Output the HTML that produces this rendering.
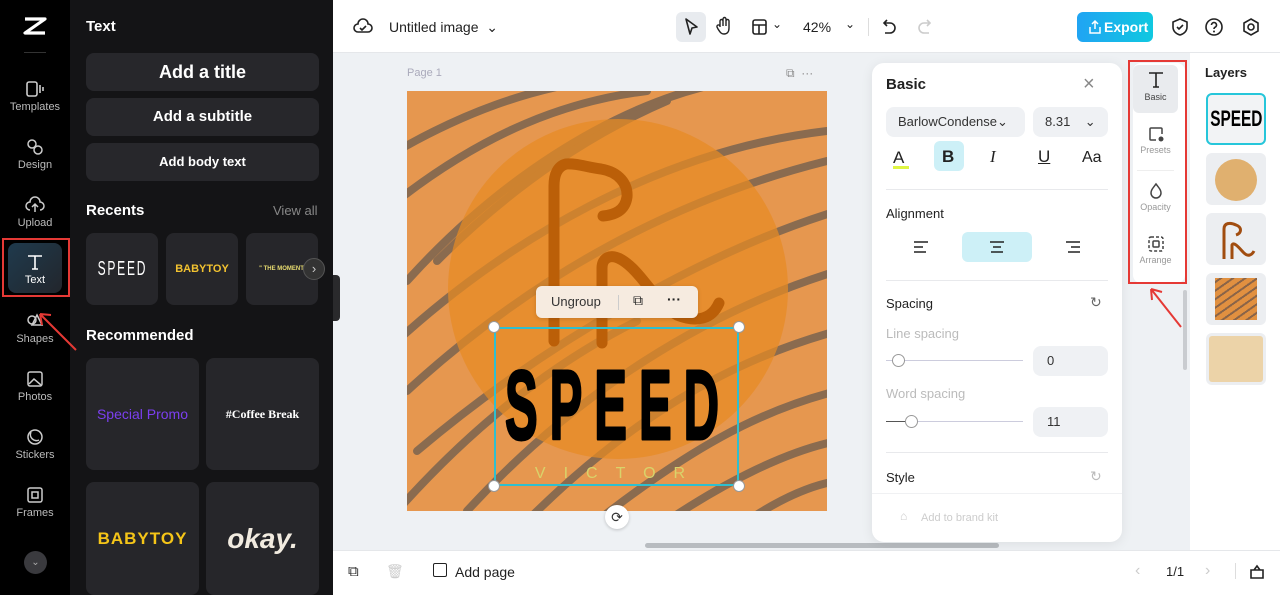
<!DOCTYPE html>
<html><head><meta charset="utf-8"><style>
*{box-sizing:border-box;margin:0;padding:0}
body{width:1280px;height:595px;overflow:hidden;font-family:"Liberation Sans",sans-serif;background:#eef1f4;position:relative}
.abs{position:absolute}
.rail{left:0;top:0;width:70px;height:595px;background:#000}
.ri{position:absolute;left:0;width:70px;text-align:center;color:#bbb;font-size:11px}
.ri svg{display:block;margin:0 auto 3px}
.panel{left:70px;top:0;width:263px;height:595px;background:#141416}
.btn{position:absolute;left:16px;width:233px;background:#27272b;border-radius:8px;color:#fff;font-weight:bold;text-align:center}
.card{position:absolute;background:#26262a;border-radius:8px;display:flex;align-items:center;justify-content:center}
.top{left:333px;top:0;width:947px;height:53px;background:#fff;border-bottom:1px solid #e5e7ea}
.bot{left:333px;top:550px;width:947px;height:45px;background:#fff;border-top:1px solid #e5e7ea}
.props{left:872px;top:63px;width:250px;height:479px;background:#fff;border-radius:12px;box-shadow:0 2px 12px rgba(0,0,0,.08)}
.lbl{position:absolute;font-size:13px;color:#222}
.g{color:#bbb}
.inp{position:absolute;background:#eff1f4;border-radius:8px;font-size:13px;color:#333}
.hr{position:absolute;left:14px;width:222px;height:1px;background:#e8e9ec}
.layers{left:1190px;top:53px;width:90px;height:497px;background:#fff}
.th{position:absolute;left:16px;width:60px;height:52px;border-radius:6px;background:#eceef1;overflow:hidden}
.nar{display:inline-block;transform:scaleX(.6)}
</style></head><body>
<div class="abs rail">
 <svg class="abs" style="left:23px;top:16px" width="24" height="20" viewBox="0 0 24 20"><path d="M2 3h20L2 17h20" fill="none" stroke="#fff" stroke-width="3.2" stroke-linejoin="round"/></svg>
 <div class="abs" style="left:24px;top:52px;width:22px;height:1px;background:#333"></div>
 <div class="ri" style="top:80px"><svg width="20" height="18"><rect x="2" y="2" width="10" height="14" rx="2" fill="none" stroke="#ccc" stroke-width="1.6"/><path d="M15 5v8M18 7v4" stroke="#ccc" stroke-width="1.6"/></svg>Templates</div>
 <div class="ri" style="top:138px"><svg width="20" height="18"><circle cx="7" cy="6" r="4" fill="none" stroke="#ccc" stroke-width="1.5"/><circle cx="13" cy="12" r="4" fill="none" stroke="#ccc" stroke-width="1.5"/></svg>Design</div>
 <div class="ri" style="top:196px"><svg width="20" height="18"><path d="M5 14a4 4 0 0 1 0-8 5 5 0 0 1 10 0 4 4 0 0 1 0 8M10 8v8M7 11l3-3 3 3" fill="none" stroke="#ccc" stroke-width="1.5"/></svg>Upload</div>
 <div class="abs" style="left:2px;top:238px;width:68px;height:59px;border:2px solid #e53935"></div>
 <div class="abs" style="left:8px;top:243px;width:54px;height:50px;border-radius:8px;background:linear-gradient(135deg,#1f3a4d,#22262c)"></div>
 <div class="ri" style="top:253px;color:#fff;font-size:11px"><svg width="20" height="18"><path d="M3 3h14M10 3v13M7 16h6" stroke="#fff" stroke-width="1.6" fill="none"/></svg>Text</div>
 <div class="ri" style="top:312px"><svg width="20" height="18"><circle cx="7" cy="8" r="4" fill="none" stroke="#ccc" stroke-width="1.5"/><path d="M12 3l5 10h-10z" fill="none" stroke="#ccc" stroke-width="1.5"/></svg>Shapes</div>
 <div class="ri" style="top:370px"><svg width="20" height="18"><rect x="3" y="2" width="14" height="14" rx="2" fill="none" stroke="#ccc" stroke-width="1.5"/><path d="M4 14l5-5 7 6" fill="none" stroke="#ccc" stroke-width="1.5"/></svg>Photos</div>
 <div class="ri" style="top:428px"><svg width="20" height="18"><circle cx="10" cy="9" r="7" fill="none" stroke="#ccc" stroke-width="1.5"/><path d="M6 4a6 6 0 0 0 8 8" fill="none" stroke="#ccc" stroke-width="1.5"/></svg>Stickers</div>
 <div class="ri" style="top:486px"><svg width="20" height="18"><rect x="3" y="2" width="14" height="14" rx="2" fill="none" stroke="#ccc" stroke-width="1.5"/><rect x="7" y="6" width="6" height="6" fill="none" stroke="#ccc" stroke-width="1.5"/></svg>Frames</div>
 <div class="abs" style="left:24px;top:551px;width:23px;height:23px;border-radius:50%;background:#3a3a3e;color:#aaa;font-size:10px;text-align:center;line-height:23px">⌄</div>
</div>
<div class="abs panel">
 <div class="abs" style="left:16px;top:18px;color:#fff;font-weight:bold;font-size:15px">Text</div>
 <div class="btn" style="top:53px;height:38px;line-height:38px;font-size:18px">Add a title</div>
 <div class="btn" style="top:98px;height:38px;line-height:38px;font-size:15px">Add a subtitle</div>
 <div class="btn" style="top:143px;height:38px;line-height:38px;font-size:13px">Add body text</div>
 <div class="abs" style="left:16px;top:202px;color:#fff;font-weight:bold;font-size:15px">Recents</div>
 <div class="abs" style="left:203px;top:203px;color:#888;font-size:13px">View all</div>
 <div class="card" style="left:16px;top:233px;width:72px;height:72px;color:#fff;font-size:20px;letter-spacing:3px"><span class="nar">SPEED</span></div>
 <div class="card" style="left:96px;top:233px;width:72px;height:72px;color:#f2c230;font-size:11px;font-weight:bold">BABYTOY</div>
 <div class="card" style="left:176px;top:233px;width:72px;height:72px;color:#e8dc70;font-size:6px;font-weight:bold">" THE MOMENT.</div>
 <div class="abs" style="left:233px;top:258px;width:22px;height:22px;border-radius:50%;background:#333;border:1px solid #555;color:#ccc;font-size:13px;text-align:center;line-height:20px">›</div>
 <div class="abs" style="left:16px;top:327px;color:#fff;font-weight:bold;font-size:15px">Recommended</div>
 <div class="card" style="left:16px;top:358px;width:113px;height:112px;color:#7b3ff0;font-size:14px">Special Promo</div>
 <div class="card" style="left:136px;top:358px;width:113px;height:112px;color:#fff;font-size:12px;font-weight:bold;font-family:'Liberation Serif',serif">#Coffee Break</div>
 <div class="card" style="left:16px;top:482px;width:113px;height:113px;color:#f5c518;font-size:17px;font-weight:bold;letter-spacing:1px">BABYTOY</div>
 <div class="card" style="left:136px;top:482px;width:113px;height:113px;color:#f1ebe0;font-size:28px;font-weight:bold;font-style:italic">okay.</div>
</div>
<div class="abs" style="left:333px;top:275px;width:7px;height:46px;background:#2a2a2c;border-radius:0 4px 4px 0"></div>
<div class="abs top">
 <svg class="abs" style="left:20px;top:18px" width="20" height="18"><path d="M5 14a4 4 0 0 1 0-8 5 5 0 0 1 10 0 4 4 0 0 1 0 8z M7 10l2 2 4-4" fill="none" stroke="#222" stroke-width="1.6"/></svg>
 <div class="abs" style="left:56px;top:19px;font-size:14px;color:#222">Untitled image &nbsp;⌄</div>
 <div class="abs" style="left:343px;top:12px;width:30px;height:30px;border-radius:6px;background:#e8ebef"></div>
 <svg class="abs" style="left:350px;top:17px" width="16" height="20"><path d="M3 2l11 8-5 1-2 6z" fill="none" stroke="#222" stroke-width="1.6" stroke-linejoin="round"/></svg>
 <svg class="abs" style="left:382px;top:16px" width="18" height="20"><path d="M5 11V5a1.5 1.5 0 0 1 3 0v5V3a1.5 1.5 0 0 1 3 0v7V5a1.5 1.5 0 0 1 3 0v7c0 4-2 6-5 6s-4-2-6-5l-1-2a1.5 1.5 0 0 1 3-1z" fill="none" stroke="#222" stroke-width="1.4"/></svg>
 <svg class="abs" style="left:418px;top:18px" width="18" height="18"><rect x="2" y="2" width="13" height="14" rx="2" fill="none" stroke="#222" stroke-width="1.6"/><path d="M2 7h13M8 7v9" stroke="#222" stroke-width="1.6"/></svg>
 <div class="abs" style="left:439px;top:17px;font-size:12px;color:#222">⌄</div>
 <div class="abs" style="left:470px;top:19px;font-size:14px;color:#222">42%</div>
 <div class="abs" style="left:512px;top:17px;font-size:12px;color:#222">⌄</div>
 <div class="abs" style="left:535px;top:18px;width:1px;height:18px;background:#ddd"></div>
 <svg class="abs" style="left:548px;top:17px" width="18" height="20"><path d="M6 3L3 6l3 3M3 6h6a5 5 0 0 1 0 10H4" fill="none" stroke="#222" stroke-width="1.6"/></svg>
 <svg class="abs" style="left:582px;top:17px" width="18" height="20"><path d="M12 3l3 3-3 3M15 6H9a5 5 0 0 0 0 10h5" fill="none" stroke="#ccc" stroke-width="1.6"/></svg>
 <div class="abs" style="left:744px;top:12px;width:76px;height:30px;border-radius:6px;background:linear-gradient(90deg,#20a4f3,#10c8e0);color:#fff;font-weight:bold;font-size:14px;line-height:30px;padding-left:27px">Export</div>
 <svg class="abs" style="left:755px;top:19px" width="14" height="16"><path d="M7 2v8M4 5l3-3 3 3M2 8v6h10V8" fill="none" stroke="#fff" stroke-width="1.5"/></svg>
 <svg class="abs" style="left:838px;top:17px" width="18" height="20"><path d="M9 2l7 3v5c0 4-3 7-7 8-4-1-7-4-7-8V5z M6 10l2 2 4-4" fill="none" stroke="#222" stroke-width="1.6"/></svg>
 <svg class="abs" style="left:871px;top:17px" width="20" height="20"><circle cx="10" cy="10" r="8" fill="none" stroke="#222" stroke-width="1.6"/><path d="M7.5 8a2.5 2.5 0 1 1 3.5 2.3c-.8.4-1 .9-1 1.7" fill="none" stroke="#222" stroke-width="1.6"/><circle cx="10" cy="14.5" r="1" fill="#222"/></svg>
 <svg class="abs" style="left:908px;top:17px" width="20" height="20"><path d="M10 2l7 4v8l-7 4-7-4V6z" fill="none" stroke="#222" stroke-width="1.6"/><circle cx="10" cy="10" r="3" fill="none" stroke="#222" stroke-width="1.6"/></svg>
</div>
<div class="abs" style="left:407px;top:67px;font-size:11px;color:#aab">Page 1</div>
<div class="abs" style="left:786px;top:66px;font-size:12px;color:#888">⧉ &nbsp;···</div>
<svg class="abs" style="left:407px;top:91px" width="420" height="420" viewBox="0 0 420 420">
 <rect width="420" height="420" fill="#e6974f"/>
 <g fill="none" stroke="#86694f" stroke-width="8" stroke-linecap="round" opacity=".95">
  <path d="M-10 60C60 20 120 0 180 -10"/><path d="M-10 110C80 40 160 10 240 0"/>
  <path d="M0 190C90 90 200 20 300 -5"/><path d="M-10 250C100 150 250 60 420 40"/>
  <path d="M0 300C120 190 260 110 420 70"/><path d="M10 360C140 250 300 160 430 120"/>
  <path d="M60 420C170 300 300 220 430 180"/><path d="M120 430C220 330 320 270 430 240"/>
  <path d="M190 430C280 360 350 320 430 300"/><path d="M260 430C320 390 380 360 430 350"/>
  <path d="M-10 420C70 330 150 270 230 230"/><path d="M30 170C110 90 190 40 260 10"/>
  <path d="M340 430C370 410 400 395 430 390"/>
 </g>
 <circle cx="211" cy="198" r="170" fill="#e88b22" opacity=".72"/>
 <g fill="none" stroke="#bb5f08" stroke-width="11" stroke-linecap="round" stroke-linejoin="round">
  <path d="M147 250V95c0-12 4-20 12-22 10-1 20 3 35 5 18 3 27 15 26 28-2 14-13 18-24 19"/>
  <path d="M195 252v-75c0-10 8-15 20-8 20 12 35 45 55 55 20 8 35 4 42-12"/>
 </g>
 <text transform="translate(211,348) scale(0.5,1)" x="0" y="0" text-anchor="middle" font-family="Liberation Sans, sans-serif" font-weight="bold" font-size="98" letter-spacing="24" fill="#000" stroke="#000" stroke-width="3" stroke-linejoin="round">SPEED</text>
 <text x="212" y="387" text-anchor="middle" font-family="Liberation Sans, sans-serif" font-size="16" letter-spacing="18" fill="#d9d36a">VICTOR</text>
</svg>
<div class="abs" style="left:494px;top:327px;width:245px;height:159px;border:2px solid #2fbfcf"></div>
<div class="abs" style="left:488px;top:321px;width:12px;height:12px;border-radius:50%;background:#fff;border:1px solid #999"></div>
<div class="abs" style="left:733px;top:321px;width:12px;height:12px;border-radius:50%;background:#fff;border:1px solid #999"></div>
<div class="abs" style="left:488px;top:480px;width:12px;height:12px;border-radius:50%;background:#fff;border:1px solid #999"></div>
<div class="abs" style="left:733px;top:480px;width:12px;height:12px;border-radius:50%;background:#fff;border:1px solid #999"></div>
<div class="abs" style="left:536px;top:286px;width:162px;height:32px;border-radius:6px;background:#f6ebe0;box-shadow:0 1px 4px rgba(0,0,0,.15)">
 <div class="abs" style="left:15px;top:8px;font-size:13px;color:#333">Ungroup</div>
 <div class="abs" style="left:82px;top:9px;width:1px;height:15px;background:#ccc"></div>
 <div class="abs" style="left:97px;top:6px;font-size:14px;color:#222">⧉</div>
 <div class="abs" style="left:131px;top:5px;font-size:14px;color:#222;font-weight:bold">···</div>
</div>
<div class="abs" style="left:605px;top:505px;width:24px;height:24px;border-radius:50%;background:#fff;box-shadow:0 1px 3px rgba(0,0,0,.2);text-align:center;line-height:24px;font-size:14px;color:#333">⟳</div>
<div class="abs" style="left:645px;top:543px;width:354px;height:5px;border-radius:3px;background:#b8bcc0"></div>
<div class="abs props">
 <div class="lbl" style="left:14px;top:13px;font-size:15px;font-weight:bold">Basic</div>
 <div class="lbl" style="left:211px;top:10px;font-size:20px;color:#888">×</div>
 <div class="inp" style="left:14px;top:44px;width:139px;height:30px;line-height:30px;padding-left:12px">BarlowCondense⌄</div>
 <div class="inp" style="left:161px;top:44px;width:75px;height:30px;line-height:30px;padding-left:12px">8.31 &nbsp;&nbsp;&nbsp;⌄</div>
 <div class="lbl" style="left:21px;top:85px;font-size:17px">A</div>
 <div class="abs" style="left:21px;top:103px;width:16px;height:3px;background:#dff542"></div>
 <div class="abs" style="left:62px;top:78px;width:30px;height:30px;border-radius:6px;background:#cdf0f7"></div>
 <div class="lbl" style="left:70px;top:84px;font-size:17px;font-weight:bold">B</div>
 <div class="lbl" style="left:118px;top:84px;font-size:17px;font-style:italic;font-family:'Liberation Serif',serif">I</div>
 <div class="lbl" style="left:166px;top:84px;font-size:17px;text-decoration:underline">U</div>
 <div class="lbl" style="left:210px;top:86px;font-size:16px">Aa</div>
 <div class="hr" style="top:126px"></div>
 <div class="lbl" style="left:14px;top:143px">Alignment</div>
 <div class="abs" style="left:90px;top:169px;width:70px;height:30px;border-radius:6px;background:#cdf0f7"></div>
 <svg class="abs" style="left:41px;top:177px" width="16" height="14"><path d="M1 2h14M1 7h9M1 12h12" stroke="#222" stroke-width="1.5"/></svg>
 <svg class="abs" style="left:117px;top:177px" width="16" height="14"><path d="M1 2h14M4 7h8M2 12h12" stroke="#222" stroke-width="1.5"/></svg>
 <svg class="abs" style="left:193px;top:177px" width="16" height="14"><path d="M1 2h14M6 7h9M3 12h12" stroke="#222" stroke-width="1.5"/></svg>
 <div class="hr" style="top:217px"></div>
 <div class="lbl" style="left:14px;top:233px">Spacing</div>
 <div class="lbl" style="left:218px;top:231px;font-size:14px;color:#666">↻</div>
 <div class="lbl g" style="left:14px;top:263px">Line spacing</div>
 <div class="abs" style="left:14px;top:297px;width:137px;height:1px;background:#ccd"></div>
 <div class="abs" style="left:20px;top:291px;width:13px;height:13px;border-radius:50%;background:#fff;border:1px solid #999"></div>
 <div class="inp" style="left:161px;top:283px;width:75px;height:30px;line-height:30px;padding-left:14px">0</div>
 <div class="lbl g" style="left:14px;top:323px">Word spacing</div>
 <div class="abs" style="left:14px;top:358px;width:137px;height:1px;background:#ccd"></div>
 <div class="abs" style="left:14px;top:358px;width:26px;height:1px;background:#555"></div>
 <div class="abs" style="left:33px;top:352px;width:13px;height:13px;border-radius:50%;background:#fff;border:1px solid #999"></div>
 <div class="inp" style="left:161px;top:344px;width:75px;height:30px;line-height:30px;padding-left:14px">11</div>
 <div class="hr" style="top:389px"></div>
 <div class="lbl" style="left:14px;top:407px">Style</div>
 <div class="lbl" style="left:218px;top:405px;font-size:14px;color:#bbb">↻</div>
 <div class="abs" style="left:0;top:430px;width:250px;height:1px;background:#f0f1f3"></div>
 <div class="lbl" style="left:49px;top:449px;font-size:11px;color:#ccc">Add to brand kit</div>
 <div class="lbl" style="left:28px;top:446px;font-size:12px;color:#ccc">⌂</div>
</div>
<div class="abs" style="left:1133px;top:63px;width:52px;height:220px;background:#fff;border-radius:8px"></div>
<div class="abs" style="left:1128px;top:60px;width:59px;height:224px;border:2px solid #e53935"></div>
<div class="abs" style="left:1133px;top:65px;width:45px;height:48px;border-radius:6px;background:#e9ebee"></div>
<div class="abs" style="left:1133px;top:70px;width:45px;text-align:center;font-size:9px;color:#444"><svg width="20" height="20"><path d="M3 3h14M10 3v14M7 17h6" stroke="#222" stroke-width="1.6" fill="none"/></svg><br>Basic</div>
<div class="abs" style="left:1133px;top:125px;width:45px;text-align:center;font-size:9px;color:#999"><svg width="18" height="18"><path d="M9 15H4a1 1 0 0 1-1-1V4a1 1 0 0 1 1-1h10a1 1 0 0 1 1 1v5" fill="none" stroke="#444" stroke-width="1.5"/><circle cx="14" cy="14" r="2.5" fill="#444"/></svg><br>Presets</div>
<div class="abs" style="left:1137px;top:170px;width:37px;height:1px;background:#eee"></div>
<div class="abs" style="left:1133px;top:182px;width:45px;text-align:center;font-size:9px;color:#999"><svg width="18" height="18"><path d="M9 2c3 4 5 6 5 9a5 5 0 0 1-10 0c0-3 2-5 5-9z" fill="none" stroke="#444" stroke-width="1.5"/></svg><br>Opacity</div>
<div class="abs" style="left:1133px;top:235px;width:45px;text-align:center;font-size:9px;color:#999"><svg width="18" height="18"><rect x="2" y="2" width="14" height="14" rx="2" fill="none" stroke="#444" stroke-width="1.5" stroke-dasharray="3 2"/><rect x="6" y="6" width="6" height="6" rx="1" fill="none" stroke="#444" stroke-width="1.5"/></svg><br>Arrange</div>
<svg class="abs" style="left:1145px;top:285px" width="40" height="46"><path d="M36 42L6 4M6 4l1 11M6 4l11 3" fill="none" stroke="#e53935" stroke-width="2"/></svg>
<svg class="abs" style="left:30px;top:308px" width="50" height="46"><path d="M46 42L10 6M10 6l2 11M10 6l11 1" fill="none" stroke="#e53935" stroke-width="2"/></svg>
<div class="abs" style="left:1183px;top:290px;width:4px;height:80px;background:#c9ccd0;border-radius:2px"></div>
<div class="abs layers">
 <div class="abs" style="left:15px;top:12px;font-size:13px;font-weight:bold;color:#222">Layers</div>
 <div class="th" style="top:40px;border:2px solid #26c6da;background:#f2f3f5;font-weight:bold;font-size:22px;line-height:48px;text-align:center;white-space:nowrap"><span class="nar" style="transform:scaleX(.7);margin-left:-10px;margin-right:-10px">SPEED</span></div>
 <div class="th" style="top:100px"><div style="margin:6px auto;width:42px;height:42px;border-radius:50%;background:#e0b06f"></div></div>
 <div class="th" style="top:160px"><svg width="60" height="52"><path d="M18 46V16c0-6 6-7 12-4 6 2 6 8 0 10M26 46V32c2-4 8 4 12 8s8 2 10-2" fill="none" stroke="#a14d10" stroke-width="3"/></svg></div>
 <div class="th" style="top:220px"><div style="margin:5px auto;width:42px;height:42px;background:repeating-linear-gradient(-35deg,#e19040 0 5px,#8a6448 5px 7px)"></div></div>
 <div class="th" style="top:280px"><div style="margin:3px;width:54px;height:46px;background:#ecd3a8;border-radius:3px"></div></div>
</div>
<div class="abs bot">
 <div class="abs" style="left:15px;top:12px;font-size:15px;color:#222">⧉</div>
 <div class="abs" style="left:53px;top:12px;font-size:14px;color:#ccc">🗑</div>
 <div class="abs" style="left:100px;top:12px;width:14px;height:14px;border:1.5px solid #222;border-radius:2px"></div>
 <div class="abs" style="left:122px;top:13px;font-size:14px;color:#222">Add page</div>
 <div class="abs" style="left:802px;top:11px;font-size:16px;color:#ccc">‹</div>
 <div class="abs" style="left:833px;top:13px;font-size:13px;color:#222">1/1</div>
 <div class="abs" style="left:872px;top:11px;font-size:16px;color:#ccc">›</div>
 <div class="abs" style="left:902px;top:12px;width:1px;height:16px;background:#ddd"></div>
 <svg class="abs" style="left:915px;top:11px" width="18" height="18"><path d="M3 8h12v8H3z M6 8l3-4 3 4" fill="none" stroke="#222" stroke-width="1.6"/></svg>
</div>
</body></html>
